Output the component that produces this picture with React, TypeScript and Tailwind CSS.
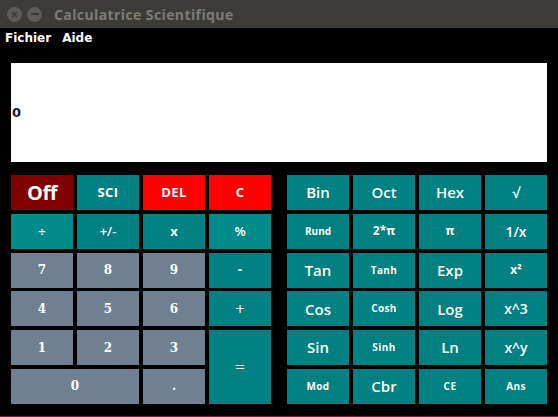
import React from "react";

type K = { t: string; c: string; f?: string; s?: string; cls?: string };

const TEAL = "bg-[#008080]";
const DCYAN = "bg-[#008b8b]";
const GREY = "bg-[#708090]";

const sans = "font-['Open_Sans',sans-serif] font-bold";
const serif = "font-['DejaVu_Serif',serif] font-bold";

function Key({ k }: { k: K }) {
  return (
    <div
      className={`${k.c} ${k.cls ?? ""} flex items-center justify-center text-white ${k.f ?? sans} ${k.s ?? "text-[13px]"}`}
    >
      {k.t}
    </div>
  );
}

export default function App() {
  const left: K[] = [
    { t: "Off", c: "bg-[#800000]", s: "text-[20px] tracking-[-0.5px]" },
    { t: "SCI", c: TEAL, s: "text-[13px] tracking-[0.5px]" },
    { t: "DEL", c: "bg-[#ff0000]", s: "text-[13px] tracking-[0.5px]" },
    { t: "C", c: "bg-[#ff0000]", s: "text-[13px]" },
    { t: "÷", c: DCYAN, s: "text-[13px] font-semibold" },
    { t: "+/-", c: TEAL, s: "text-[13px] font-semibold" },
    { t: "x", c: TEAL, s: "text-[13px]" },
    { t: "%", c: DCYAN, s: "text-[13px] font-semibold" },
    { t: "7", c: GREY, f: serif, s: "text-[12px]" },
    { t: "8", c: GREY, f: serif, s: "text-[12px]" },
    { t: "9", c: GREY, f: serif, s: "text-[12px]" },
    { t: "-", c: TEAL, f: serif, s: "text-[12px]" },
    { t: "4", c: GREY, f: serif, s: "text-[12px]" },
    { t: "5", c: GREY, f: serif, s: "text-[12px]" },
    { t: "6", c: GREY, f: serif, s: "text-[12px]" },
    { t: "+", c: TEAL, f: "font-['DejaVu_Serif',serif]", s: "text-[13px]" },
    { t: "1", c: GREY, f: serif, s: "text-[12px]" },
    { t: "2", c: GREY, f: serif, s: "text-[12px]" },
    { t: "3", c: GREY, f: serif, s: "text-[12px]" },
    { t: "=", c: TEAL, f: "font-['DejaVu_Serif',serif]", s: "text-[13px]", cls: "row-span-2" },
    { t: "0", c: GREY, f: serif, s: "text-[12px]", cls: "col-span-2" },
    { t: ".", c: GREY, f: serif, s: "text-[12px]" },
  ];
  const big = "text-[15px] font-semibold";
  const small = "text-[10px] tracking-[0.4px]";
  const mid = "text-[14px] font-semibold";
  const right: K[] = [
    { t: "Bin", c: TEAL, s: big },
    { t: "Oct", c: TEAL, s: big },
    { t: "Hex", c: TEAL, s: big },
    { t: "√", c: TEAL, s: "text-[14px] font-semibold" },
    { t: "Rund", c: TEAL, s: "text-[10px]" },
    { t: "2*π", c: TEAL, s: "text-[12px]" },
    { t: "π", c: TEAL, s: "text-[12px]" },
    { t: "1/x", c: TEAL, s: mid },
    { t: "Tan", c: TEAL, s: big },
    { t: "Tanh", c: TEAL, s: small },
    { t: "Exp", c: TEAL, s: big },
    { t: "x²", c: TEAL, s: "text-[12px]" },
    { t: "Cos", c: TEAL, s: big },
    { t: "Cosh", c: TEAL, s: small },
    { t: "Log", c: TEAL, s: big },
    { t: "x^3", c: TEAL, s: mid },
    { t: "Sin", c: TEAL, s: big },
    { t: "Sinh", c: TEAL, s: small },
    { t: "Ln", c: TEAL, s: big },
    { t: "x^y", c: TEAL, s: mid },
    { t: "Mod", c: TEAL, s: small },
    { t: "Cbr", c: TEAL, s: big },
    { t: "CE", c: TEAL, s: small },
    { t: "Ans", c: TEAL, s: small },
  ];

  return (
    <div className="w-[558px] h-[417px] bg-black flex flex-col overflow-hidden">
      <div className="h-[28px] bg-[#3c3b37] flex items-center shrink-0">
        <div className="ml-[7px] w-[15px] h-[15px] rounded-full bg-[#5c5b57] flex items-center justify-center">
          <svg width="7" height="7" viewBox="0 0 7 7">
            <path d="M1 1L6 6M6 1L1 6" stroke="#3c3b37" strokeWidth="1.6" />
          </svg>
        </div>
        <div className="ml-[5px] w-[15px] h-[15px] rounded-full bg-[#5c5b57] flex items-center justify-center">
          <div className="w-[8px] h-[2px] bg-[#3c3b37]" />
        </div>
        <div className="ml-[12px] text-[#7d7b75] text-[14px] font-bold font-['Open_Sans',sans-serif] tracking-[0.4px]">
          Calculatrice Scientifique
        </div>
      </div>
      <div className="h-[20px] flex items-center text-white text-[12px] font-bold font-['DejaVu_Sans',sans-serif] shrink-0">
        <span className="ml-[5px]">Fichier</span>
        <span className="ml-[11px]">Aide</span>
      </div>
      <div className="mt-[15px] ml-[11px] w-[536px] h-[99px] bg-white flex items-center shrink-0">
        <span className="ml-[1px] text-[13px] text-[#15152a] font-semibold font-['DejaVu_Sans',sans-serif]">0</span>
      </div>
      <div className="mt-[13px] flex">
        <div className="ml-[11px] grid grid-cols-[62px_62px_62px_62px] grid-rows-[35px_35px_35px_35px_35px_35px] gap-x-[4px] gap-y-[3.8px]">
          {left.map((k, i) => (
            <Key key={i} k={k} />
          ))}
        </div>
        <div className="ml-[16px] grid grid-cols-[62px_62px_62px_62px] grid-rows-[35px_35px_35px_35px_35px_35px] gap-x-[4px] gap-y-[3.8px]">
          {right.map((k, i) => (
            <Key key={i} k={k} />
          ))}
        </div>
      </div>
      <div className="mt-auto h-[1px] bg-[#7a1f44]" />
    </div>
  );
}
